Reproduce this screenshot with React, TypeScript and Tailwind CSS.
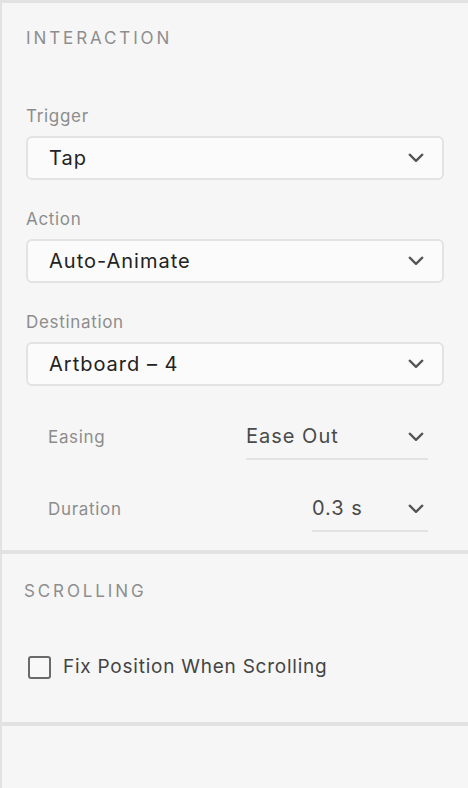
import React from "react";

const Chevron = ({ className = "" }: { className?: string }) => (
  <svg width="16" height="10" viewBox="0 0 16 10" fill="none" className={`shrink-0 ${className}`}>
    <path d="M1.7 1.7 L8 7.8 L14.3 1.7" stroke="#555" strokeWidth="2.3" strokeLinecap="round" strokeLinejoin="round" />
  </svg>
);

function Field({ label, value }: { label: string; value: string }) {
  return (
    <div>
      <div className="text-[17px] leading-[20px] tracking-[0.04em] text-[#8d8d8d]">{label}</div>
      <div className="mt-[10px] h-[44px] flex items-center justify-between rounded-[6px] border-2 border-[#e3e3e3] bg-[#fbfbfb] pl-[21px] pr-[18px]">
        <span className="text-[20px] leading-[24px] tracking-[0.05em] text-[#222]">{value}</span>
        <Chevron />
      </div>
    </div>
  );
}

function InlineSelect({ label, value, width }: { label: string; value: string; width: string }) {
  return (
    <div className="flex items-start justify-between pl-[22px] pr-[16px]">
      <span className="mt-[6px] text-[17px] leading-[20px] tracking-[0.04em] text-[#8d8d8d]">{label}</span>
      <div className={`${width} flex items-center justify-between border-b-2 border-[#e2e2e2] pt-[3px] pb-[10px] pr-[4px]`}>
        <span className="text-[20px] leading-[24px] tracking-[0.05em] text-[#4a4a4a]">{value}</span>
        <Chevron className="mt-[2px]" />
      </div>
    </div>
  );
}

export default function App() {
  return (
    <div
      className="w-[468px] h-[788px] bg-[#f6f6f6] border-t-[3px] border-l-2 border-[#e2e2e2] overflow-hidden"
      style={{ fontFamily: "Inter, 'Noto Sans', sans-serif" }}
    >
      {/* interaction */}
      <section className="h-[551px] border-b-4 border-[#e2e2e2] px-[24px] pt-[23px]">
        <h2 className="text-[17px] leading-[24px] tracking-[0.17em] text-[#8e8e8e]">INTERACTION</h2>
        <div className="mt-[56px] flex flex-col gap-[29px]">
          <Field label="Trigger" value="Tap" />
          <Field label="Action" value="Auto-Animate" />
          <Field label="Destination" value="Artboard – 4" />
        </div>
        <div className="mt-[35px] flex flex-col gap-[33px]">
          <InlineSelect label="Easing" value="Ease Out" width="w-[182px]" />
          <InlineSelect label="Duration" value="0.3 s" width="w-[116px]" />
        </div>
      </section>

      {/* scrolling */}
      <section className="h-[172px] border-b-4 border-[#e2e2e2] pl-[22px] pt-[25px]">
        <h2 className="text-[17px] leading-[24px] tracking-[0.17em] text-[#8e8e8e]">SCROLLING</h2>
        <label className="mt-[50px] ml-[4px] flex items-center gap-[12px]">
          <span className="w-[23px] h-[23px] rounded-[3px] border-2 border-[#6a6a6a] bg-[#f8f8f8]" />
          <span className="text-[19px] tracking-[0.04em] text-[#444]">Fix Position When Scrolling</span>
        </label>
      </section>
    </div>
  );
}
